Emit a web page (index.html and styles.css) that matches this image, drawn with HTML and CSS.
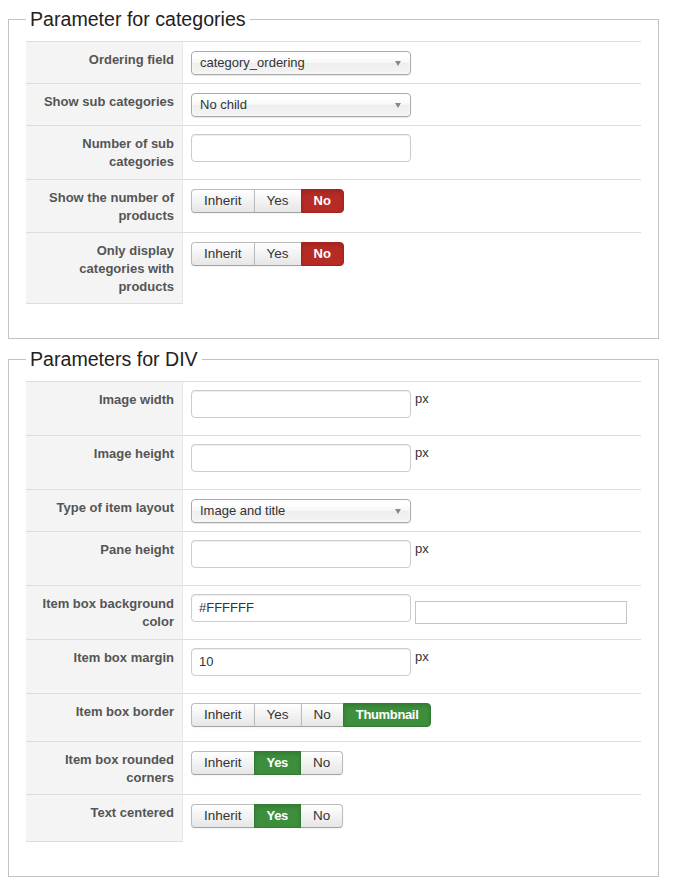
FILE: index.html
```html
<!DOCTYPE html>
<html>
<head>
<meta charset="utf-8">
<link rel="stylesheet" href="styles.css">
</head>
<body>
<fieldset class="panel">
  <legend>Parameter for categories</legend>
  <div class="form-table">
    <div class="row">
      <div class="lbl">Ordering field</div>
      <div class="ctl"><div class="select"><span>category_ordering</span><i class="caret"></i></div></div>
    </div>
    <div class="row">
      <div class="lbl">Show sub categories</div>
      <div class="ctl"><div class="select"><span>No child</span><i class="caret"></i></div></div>
    </div>
    <div class="row">
      <div class="lbl">Number of sub categories</div>
      <div class="ctl"><div class="input"></div></div>
    </div>
    <div class="row">
      <div class="lbl">Show the number of products</div>
      <div class="ctl"><div class="btn-group"><span class="btn">Inherit</span><span class="btn">Yes</span><span class="btn active danger">No</span></div></div>
    </div>
    <div class="row">
      <div class="lbl">Only display categories with products</div>
      <div class="ctl"><div class="btn-group"><span class="btn">Inherit</span><span class="btn">Yes</span><span class="btn active danger">No</span></div></div>
    </div>
  </div>
</fieldset>

<fieldset class="panel">
  <legend>Parameters for DIV</legend>
  <div class="form-table">
    <div class="row">
      <div class="lbl">Image width</div>
      <div class="ctl"><div class="input"></div><span class="unit">px</span></div>
    </div>
    <div class="row">
      <div class="lbl">Image height</div>
      <div class="ctl"><div class="input"></div><span class="unit">px</span></div>
    </div>
    <div class="row">
      <div class="lbl">Type of item layout</div>
      <div class="ctl"><div class="select"><span>Image and title</span><i class="caret"></i></div></div>
    </div>
    <div class="row">
      <div class="lbl">Pane height</div>
      <div class="ctl"><div class="input"></div><span class="unit">px</span></div>
    </div>
    <div class="row">
      <div class="lbl">Item box background color</div>
      <div class="ctl"><div class="input">#FFFFFF</div><div class="color-box"></div></div>
    </div>
    <div class="row">
      <div class="lbl">Item box margin</div>
      <div class="ctl"><div class="input">10</div><span class="unit">px</span></div>
    </div>
    <div class="row">
      <div class="lbl">Item box border</div>
      <div class="ctl"><div class="btn-group"><span class="btn">Inherit</span><span class="btn">Yes</span><span class="btn">No</span><span class="btn active success">Thumbnail</span></div></div>
    </div>
    <div class="row">
      <div class="lbl">Item box rounded corners</div>
      <div class="ctl"><div class="btn-group"><span class="btn">Inherit</span><span class="btn active success">Yes</span><span class="btn">No</span></div></div>
    </div>
    <div class="row">
      <div class="lbl">Text centered</div>
      <div class="ctl"><div class="btn-group"><span class="btn">Inherit</span><span class="btn active success">Yes</span><span class="btn">No</span></div></div>
    </div>
  </div>
</fieldset>
</body>
</html>
```

FILE: styles.css
```css
html, body {
  background: #fff;
}
body {
  margin: 8px;
  font-family: "Liberation Sans", Arial, Helvetica, sans-serif;
  font-size: 13px;
  color: #333;
}
.panel {
  width: 651px;
  box-sizing: border-box;
  margin: 0 0 9px 0;
  padding: 11px 17px 34px 17px;
  border: 1px solid #c2c2c2;
  min-width: 0;
}
.panel legend {
  padding: 0 4px;
  font-size: 19.6px;
  line-height: 22px;
  color: #222;
  font-weight: normal;
}
.form-table {
  width: 615px;
}
.row {
  display: grid;
  grid-template-columns: 157px 1fr;
  border-top: 1px solid #ddd;
}
.lbl {
  box-sizing: border-box;
  background: #f4f4f4;
  border-right: 1px solid #e8e8e8;
  padding: 9px 8px 7px 8px;
  text-align: right;
  font-weight: bold;
  line-height: 18px;
  color: #555;
}
.row:last-child .lbl {
  border-bottom: 1px solid #ddd;
}
.ctl {
  padding: 8px;
  display: flex;
  align-items: flex-start;
}
.select {
  box-sizing: border-box;
  margin-top: 1px;
  width: 220px;
  height: 24px;
  border: 1px solid #aaa;
  border-radius: 4px;
  background: linear-gradient(#ffffff 20%, #f6f6f6 50%, #eeeeee 52%, #f4f4f4 100%);
  box-shadow: inset 0 0 3px #fff, 0 1px 1px rgba(0,0,0,0.1);
  padding-left: 8px;
  display: flex;
  align-items: center;
  justify-content: space-between;
  color: #333;
  line-height: 22px;
}
.caret {
  width: 0;
  height: 0;
  border-left: 3.5px solid transparent;
  border-right: 3.5px solid transparent;
  border-top: 5px solid #888;
  margin-right: 9px;
}
.input {
  box-sizing: border-box;
  width: 220px;
  height: 28px;
  margin-bottom: 9px;
  border: 1px solid #ccc;
  border-radius: 4px;
  background: #fff;
  box-shadow: inset 0 1px 1px rgba(0,0,0,0.075);
  padding: 0 7px;
  line-height: 26px;
  color: #333;
}
.unit {
  margin-left: 4px;
  margin-top: 2px;
  line-height: 14px;
  color: #333;
}
.color-box {
  box-sizing: border-box;
  width: 212px;
  height: 23px;
  margin-top: 7px;
  margin-left: 4px;
  border: 1px solid #c4c4c4;
  background: #fff;
}
.btn-group {
  display: flex;
  margin-top: 1px;
  margin-bottom: 6px;
}
.btn {
  box-sizing: border-box;
  height: 24px;
  padding: 0 12px;
  font-size: 13.5px;
  line-height: 22px;
  border: 1px solid #bbb;
  border-bottom-color: #a2a2a2;
  background: linear-gradient(#ffffff, #e6e6e6);
  box-shadow: inset 0 1px 0 rgba(255,255,255,0.2), 0 1px 2px rgba(0,0,0,0.05);
  color: #333;
  white-space: nowrap;
}
.btn + .btn {
  margin-left: -1px;
}
.btn:first-child {
  border-radius: 4px 0 0 4px;
}
.btn:last-child {
  border-radius: 0 4px 4px 0;
}
.btn.active {
  color: #fff;
  font-size: 13px;
  font-weight: bold;
  box-shadow: inset 0 2px 4px rgba(0,0,0,0.15);
  position: relative;
}
.btn.danger {
  background: #b72b25;
  border-color: #a4231e;
}
.btn.success {
  background: #3d8f3d;
  border-color: #347a34;
  letter-spacing: -0.35px;
}
```
